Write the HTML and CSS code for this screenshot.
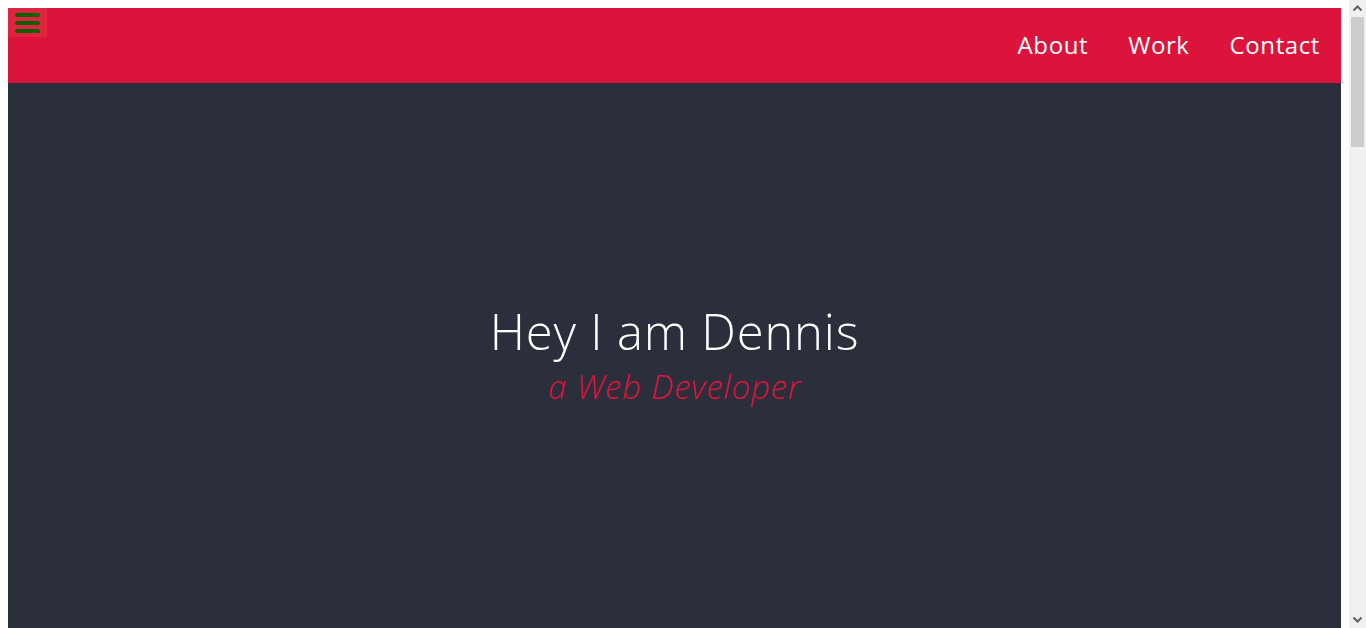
FILE: index.html
```html
<!DOCTYPE html>
<html lang="en">
<head>
<meta charset="utf-8">
<title>Dennis</title>
<link rel="stylesheet" href="styles.css">
</head>
<body>
<header class="topbar">
  <button class="menu-btn" aria-label="Menu">
    <span class="bar"></span>
    <span class="bar"></span>
    <span class="bar"></span>
  </button>
  <nav class="nav">
    <a href="#about">About</a>
    <a href="#work">Work</a>
    <a href="#contact">Contact</a>
  </nav>
</header>
<section class="hero">
  <h1 class="hero-title">Hey I am Dennis</h1>
  <p class="hero-sub">a Web Developer</p>
</section>
<section class="more" id="about"></section>
<div class="scrollbar" aria-hidden="true">
  <svg class="arrow" width="17" height="17" viewBox="0 0 17 17"><path d="M4.5 10.5 L8.5 6.5 L12.5 10.5" fill="none" stroke="#606060" stroke-width="2"/></svg>
  <div class="track"><div class="thumb"></div></div>
  <svg class="arrow" width="17" height="17" viewBox="0 0 17 17"><path d="M4.5 6.5 L8.5 10.5 L12.5 6.5" fill="none" stroke="#606060" stroke-width="2"/></svg>
</div>
</body>
</html>
```
FILE: styles.css
```css
html, body {
  margin: 0;
  padding: 0;
}
body {
  margin: 8px 25px 8px 8px;
  font-family: "Open Sans", "Noto Sans", sans-serif;
  font-weight: 300;
  background: #ffffff;
}
.topbar {
  height: 75px;
  background: #dc143c;
  display: flex;
  align-items: flex-start;
  justify-content: space-between;
}
.menu-btn {
  width: 39px;
  height: 29px;
  background: #e0243f;
  border: 0;
  padding: 5px 7px 0 7px;
  margin: 0;
  display: flex;
  flex-direction: column;
  gap: 4px;
  box-sizing: border-box;
}
.bar {
  display: block;
  width: 25px;
  height: 4px;
  border-radius: 2px;
  background: #006400;
}
.nav {
  display: flex;
  gap: 40px;
  padding: 0 21px 0 0;
  height: 75px;
  align-items: center;
}
.nav a {
  color: #ffffff;
  text-decoration: none;
  font-size: 24px;
  font-weight: 400;
  letter-spacing: 0.6px;
  margin-top: -2px;
}
.hero {
  height: 545px;
  background: #2b2e3b;
  display: flex;
  flex-direction: column;
  align-items: center;
  justify-content: center;
}
.hero-title {
  margin: 0;
  color: #ffffff;
  font-size: 49px;
  font-weight: 300;
  line-height: 58px;
  letter-spacing: 0.8px;
}
.hero-sub {
  margin: 4px 0 0 0;
  color: #dc143c;
  font-size: 33px;
  font-style: italic;
  font-weight: 300;
  line-height: 46px;
  letter-spacing: 0.8px;
}
.more {
  height: 2234px;
  background: #2b2e3b;
}
.scrollbar {
  position: fixed;
  top: 0;
  right: 0;
  width: 17px;
  height: 100vh;
  background: #f0f0f0;
  display: flex;
  flex-direction: column;
}
.arrow {
  display: block;
  flex: none;
}
.track {
  flex: 1;
  padding: 0 2px;
}
.thumb {
  height: 130px;
  background: #cdcdcd;
}
```
